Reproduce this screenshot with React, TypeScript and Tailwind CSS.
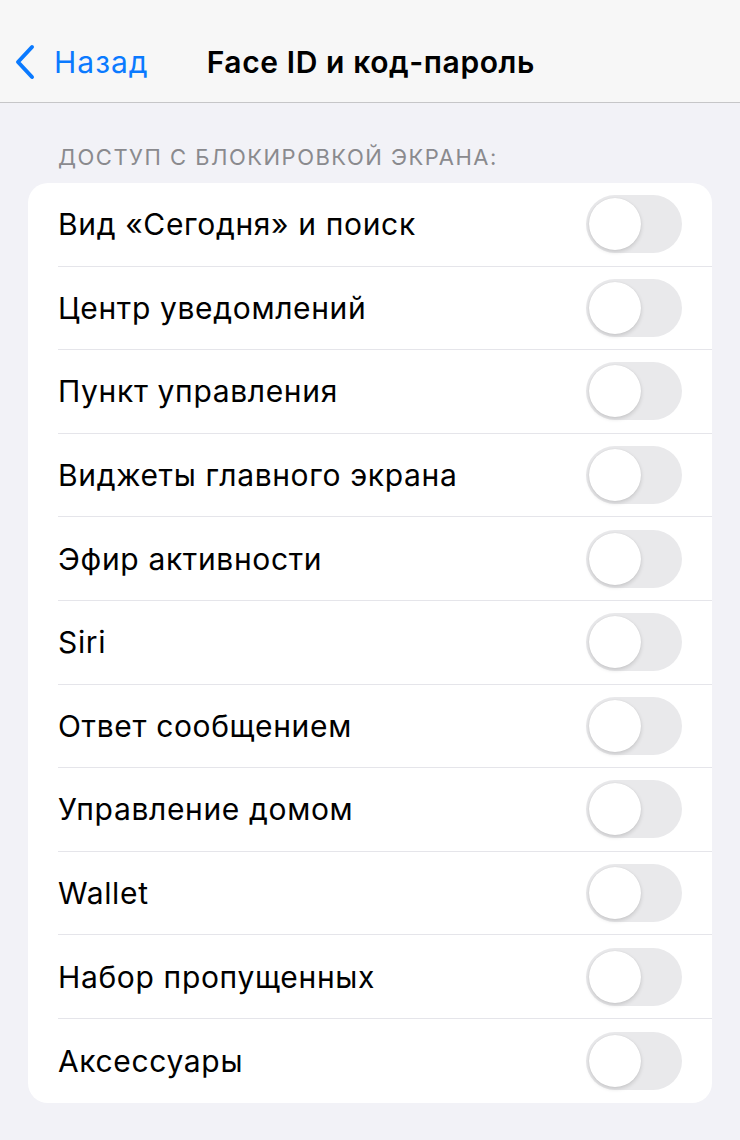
import React from "react"

const rows = [
  "Вид «Сегодня» и поиск",
  "Центр уведомлений",
  "Пункт управления",
  "Виджеты главного экрана",
  "Эфир активности",
  "Siri",
  "Ответ сообщением",
  "Управление домом",
  "Wallet",
  "Набор пропущенных",
  "Аксессуары",
]

function Toggle() {
  return (
    <div className="relative w-[96px] h-[58px] rounded-full bg-[#e9e9eb] shrink-0">
      <div className="absolute left-[3px] top-[3px] w-[52px] h-[52px] rounded-full bg-white shadow-[0_2px_4px_rgba(0,0,0,0.15),0_0_1px_rgba(0,0,0,0.1)]" />
    </div>
  )
}

export default function App() {
  return (
    <div className="w-[740px] h-[1140px] bg-[#f2f2f7] font-['Inter','Noto_Sans',sans-serif] overflow-hidden">
      {/* nav bar */}
      <div className="relative h-[103px] bg-[#f7f7f7] border-b border-[#c6c6c8] flex items-center pt-[22px]">
        <div className="flex items-center pl-[14px] text-[#0a7aff]">
          <svg width="22" height="36" viewBox="0 0 22 36" fill="none">
            <path d="M18 3 L4 18 L18 33" stroke="currentColor" strokeWidth="4" strokeLinecap="round" strokeLinejoin="round" />
          </svg>
          <span className="ml-[18px] text-[30px] leading-none tracking-[1px]">Назад</span>
        </div>
        <span className="ml-[58px] text-[30px] font-semibold leading-none text-black tracking-[0.6px]">Face ID и код-пароль</span>
      </div>

      {/* section */}
      <div className="px-[28px]">
        <div className="pl-[30px] pt-[43px] pb-[15px] text-[22px] leading-none text-[#8a8a8e] tracking-[1.5px]">
          ДОСТУП С БЛОКИРОВКОЙ ЭКРАНА:
        </div>
        <div className="bg-white rounded-[20px] overflow-hidden">
          {rows.map((label, i) => (
            <div key={label} className="pl-[30px]">
              <div
                className={`h-[83.6px] flex items-center justify-between pr-[30px] ${
                  i < rows.length - 1 ? "border-b border-[#e5e5ea]" : ""
                }`}
              >
                <span className="text-[30px] leading-none text-black tracking-[0.65px]">{label}</span>
                <Toggle />
              </div>
            </div>
          ))}
        </div>
      </div>
    </div>
  )
}
